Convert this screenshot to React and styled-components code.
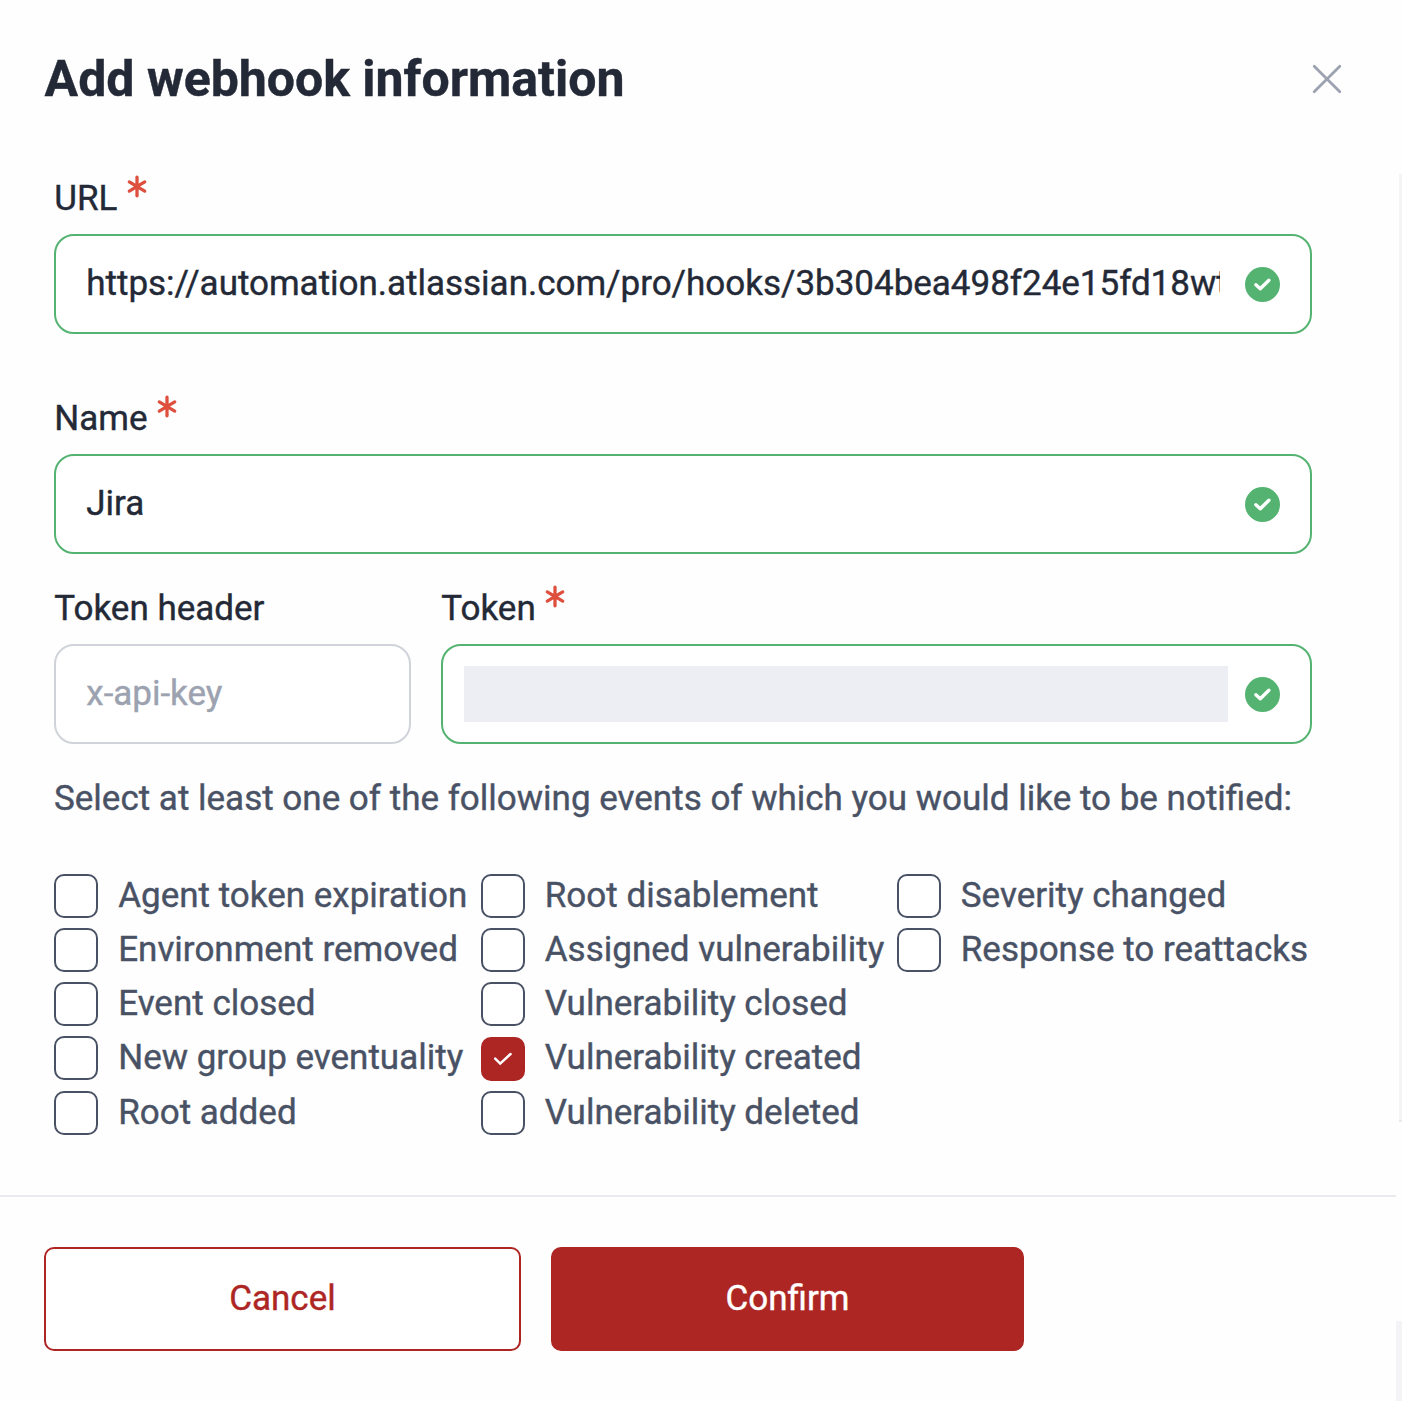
import React from "react";
import styled, { createGlobalStyle } from "styled-components";

const color = {
  title: "#232936",
  text: "#495265",
  placeholder: "#9ca2b0",
  border: "#d0d3d9",
  valid: "#55b372",
  required: "#de4f3e",
  primary: "#ad2624",
  line: "#e9e9ee",
  track: "#f4f4f6",
  masked: "#edeef3",
};

const GlobalStyle = createGlobalStyle`
  * {
    box-sizing: border-box;
  }
  body {
    margin: 0;
    background: #fefefe;
    font-family: Roboto, sans-serif;
    font-size: 35px;
    color: ${color.text};
    -webkit-text-stroke: 0.4px;
  }
`;

const Modal = styled.div`
  display: flex;
  flex-direction: column;
  width: 1402px;
  height: 1401px;
  overflow: hidden;
`;

const Header = styled.header`
  display: flex;
  align-items: center;
  justify-content: space-between;
  flex: 0 0 174px;
  padding: 0 60px 16px 44.6px;
`;

const Title = styled.h2`
  margin: 0;
  font-size: 50px;
  font-weight: 700;
  line-height: 60px;
  color: ${color.title};
`;

const CloseButton = styled.button`
  display: flex;
  padding: 0;
  border: none;
  background: none;
`;

const Body = styled.div`
  display: flex;
  height: 948px;
  flex: none;
  justify-content: space-between;
`;

const Form = styled.form`
  display: flex;
  flex-direction: column;
  width: 1258px;
  margin-left: 54px;
`;

const BodyTrack = styled.div`
  width: 3px;
  background: ${color.track};
  border-bottom: 2px solid ${color.line};
`;

const Field = styled.div`
  display: flex;
  flex-direction: column;
  flex: none;
  width: ${(props) => (props.$width ? `${props.$width}px` : "auto")};
`;

const FieldRow = styled.div`
  display: flex;
  gap: 30px;
`;

const Label = styled.label`
  display: flex;
  height: 60px;
  padding-left: 0.3px;
  line-height: 50px;
  color: ${color.title};
  svg {
    margin: 1px 0 0 9.4px;
  }
`;

const InputBox = styled.div`
  display: flex;
  align-items: center;
  justify-content: space-between;
  height: 100px;
  padding: 0 30px;
  border: 2px solid ${(props) => (props.$valid ? color.valid : color.border)};
  border-radius: 20px;
  background: white;
  margin-bottom: ${(props) => props.$space || 0}px;
`;

const Input = styled.input`
  flex: 0 1 1134px;
  min-width: 0;
  height: 60px;
  padding: 0 0 1px 0.3px;
  border: none;
  outline: none;
  background: none;
  font: inherit;
  letter-spacing: -0.015px;
  color: ${color.title};
  -webkit-text-stroke: inherit;
  &::placeholder {
    color: ${color.placeholder};
    opacity: 1;
  }
`;

const MaskedValue = styled.div`
  width: 764px;
  height: 56px;
  margin-left: -9px;
  background: ${color.masked};
`;

const Hint = styled.p`
  margin: 26px 0 0;
  padding-top: 1px;
  height: 56px;
  line-height: 56px;
  white-space: nowrap;
`;

const Events = styled.div`
  display: grid;
  grid-auto-flow: column;
  grid-template-rows: repeat(5, 44px);
  grid-template-columns: 426.6px 416px auto;
  row-gap: 10.2px;
  margin-top: 47.8px;
`;

const Option = styled.label`
  display: flex;
  align-items: center;
  gap: 20.2px;
  line-height: 42px;
  white-space: nowrap;
`;

const CheckBox = styled.span`
  display: flex;
  align-items: center;
  justify-content: center;
  flex: 0 0 44px;
  height: 44px;
  margin-top: ${(props) => (props.$checked ? 1 : 0)}px;
  border: 2px solid ${(props) => (props.$checked ? color.primary : color.text)};
  border-radius: 10px;
  background: ${(props) => (props.$checked ? color.primary : "white")};
`;

const Footer = styled.footer`
  display: flex;
  justify-content: space-between;
  flex: 1 1 auto;
  margin-top: 73px;
`;

const Actions = styled.div`
  display: flex;
  gap: 30px;
  flex: 0 0 1396px;
  padding: 50px 44px;
  border-top: 2px solid ${color.line};
`;

const Button = styled.button`
  width: ${(props) => props.$width}px;
  height: 104px;
  padding: 0 0 2px;
  border: 2px solid ${color.primary};
  border-radius: 10px;
  background: ${(props) => (props.$primary ? color.primary : "white")};
  color: ${(props) => (props.$primary ? "white" : color.primary)};
  font: inherit;
  -webkit-text-stroke: inherit;
`;

const PageTrack = styled.div`
  width: 6px;
  height: 80px;
  align-self: flex-end;
  background: ${color.track};
`;

const events = [
  "Agent token expiration",
  "Environment removed",
  "Event closed",
  "New group eventuality",
  "Root added",
  "Root disablement",
  "Assigned vulnerability",
  "Vulnerability closed",
  "Vulnerability created",
  "Vulnerability deleted",
  "Severity changed",
  "Response to reattacks",
];

const Required = () => (
  <svg width="20" height="23" viewBox="0 0 20 23" fill="none">
    <path
      d="M10 2.2v18.6M2.3 6.9l15.4 9.2M17.7 6.9L2.3 16.1"
      stroke={color.required}
      strokeWidth="3.3"
      strokeLinecap="round"
    />
  </svg>
);

const Valid = () => (
  <svg width="35" height="35" viewBox="0 0 35 35" fill="none">
    <circle cx="17.5" cy="17.5" r="17.5" fill={color.valid} />
    <path
      d="M10.9 17.7l4.4 4.1 8.6-8.5"
      stroke="white"
      strokeWidth="3.4"
      strokeLinecap="round"
      strokeLinejoin="round"
    />
  </svg>
);

const Check = () => (
  <svg width="20" height="16" viewBox="0 0 20 16" fill="none">
    <path
      d="M2.2 7.7l5 4.9 10.4-9.6"
      stroke="white"
      strokeWidth="2.5"
      strokeLinecap="round"
    />
  </svg>
);

export default function App() {
  return (
    <Modal>
      <GlobalStyle />
      <Header>
        <Title>Add webhook information</Title>
        <CloseButton type="button" title="Close">
          <svg width="30" height="30" viewBox="0 0 30 30" fill="none">
            <path
              d="M2.2 2.2l25.6 25.6M27.8 2.2L2.2 27.8"
              stroke={color.placeholder}
              strokeWidth="2.8"
              strokeLinecap="round"
            />
          </svg>
        </CloseButton>
      </Header>
      <Body>
        <Form>
          <Field>
            <Label>
              URL <Required />
            </Label>
            <InputBox $valid $space={60}>
              <Input
                readOnly
                value="https://automation.atlassian.com/pro/hooks/3b304bea498f24e15fd18wt"
              />
              <Valid />
            </InputBox>
          </Field>
          <Field>
            <Label>
              Name <Required />
            </Label>
            <InputBox $valid $space={30}>
              <Input readOnly value="Jira" />
              <Valid />
            </InputBox>
          </Field>
          <FieldRow>
            <Field $width={357}>
              <Label>Token header</Label>
              <InputBox>
                <Input placeholder="x-api-key" />
              </InputBox>
            </Field>
            <Field $width={871}>
              <Label>
                Token <Required />
              </Label>
              <InputBox $valid>
                <MaskedValue />
                <Valid />
              </InputBox>
            </Field>
          </FieldRow>
          <Hint>
            Select at least one of the following events of which you would like
            to be notified:
          </Hint>
          <Events>
            {events.map((name) => {
              const checked = name === "Vulnerability created";
              return (
                <Option key={name}>
                  <CheckBox $checked={checked}>{checked && <Check />}</CheckBox>
                  <span>{name}</span>
                </Option>
              );
            })}
          </Events>
        </Form>
        <BodyTrack />
      </Body>
      <Footer>
        <Actions>
          <Button $width={477}>Cancel</Button>
          <Button $width={473} $primary>
            Confirm
          </Button>
        </Actions>
        <PageTrack />
      </Footer>
    </Modal>
  );
}
